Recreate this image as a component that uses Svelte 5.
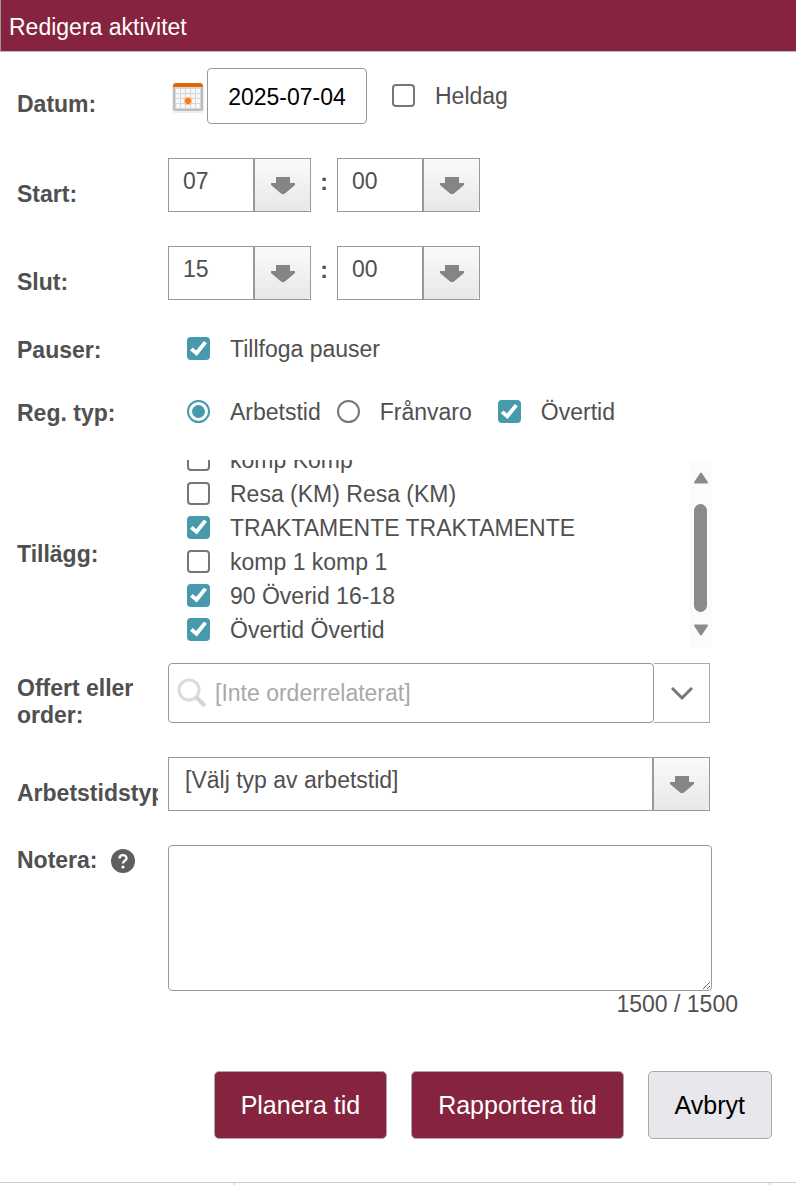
<script>
    let date = $state('2025-07-04');
    let allDay = $state(false);
    let addBreaks = $state(true);
    let regType = $state('arbetstid');
    let overtime = $state(true);
    let order = $state('');
    let workType = $state('');
    let note = $state('');

    let times = $state([
        { id: 'start', label: 'Start:', hour: '07', minute: '00' },
        { id: 'slut', label: 'Slut:', hour: '15', minute: '00' }
    ]);

    let extras = $state([
        { name: 'komp Komp', checked: false },
        { name: 'Resa (KM) Resa (KM)', checked: false },
        { name: 'TRAKTAMENTE TRAKTAMENTE', checked: true },
        { name: 'komp 1 komp 1', checked: false },
        { name: '90 Överid 16-18', checked: true },
        { name: 'Övertid Övertid', checked: true }
    ]);

    const maxLength = 1500;
    const hours = Array.from({ length: 24 }, (_, i) => String(i).padStart(2, '0'));
    const minutes = ['00', '15', '30', '45'];
    let left = $derived(maxLength - note.length);
</script>

{#snippet arrow()}
    <span class="arrow">
        <svg width="24" height="18" viewBox="0 0 24 18" aria-hidden="true">
            <path d="M5 0H19V6H24V8L14 16.5Q12 18 10 16.5L0 8V6H5Z" fill="#858585" />
        </svg>
    </span>
{/snippet}

<header>
    <h1>Redigera aktivitet</h1>
</header>

<form onsubmit={(e) => e.preventDefault()}>
    <div class="row">
        <label class="name" for="datum">Datum:</label>
        <div class="field">
            <button type="button" class="calendar" aria-label="Kalender">
                <svg width="34" height="34" viewBox="0 0 34 34">
                    <rect x="1" y="4" width="32" height="28" rx="3" fill="#eee" />
                    <rect x="2" y="3" width="30" height="27" rx="2" fill="#bdbdbd" />
                    <rect x="4" y="6" width="26" height="22" fill="#d6d6d6" />
                    <g fill="#f7f7f7">
                        {#each [0, 1, 2, 3] as r}
                            {#each [0, 1, 2, 3, 4] as c}
                                <rect x={5 + c * 5} y={8 + r * 5} width="4" height="4" />
                            {/each}
                        {/each}
                    </g>
                    <path d="M4 2H30L32 4V6H2V4Z" fill="#e2660c" />
                    <rect x="13" y="16" width="8" height="8" rx="2" fill="#fbc59c" />
                    <circle cx="17" cy="20" r="3" fill="#f57a17" />
                </svg>
            </button>
            <input id="datum" class="date" type="text" bind:value={date} />
            <label class="choice all-day">
                <input type="checkbox" bind:checked={allDay} />
                Heldag
            </label>
        </div>
    </div>

    {#each times as time}
        <div class="row">
            <label class="name" for={time.id}>{time.label}</label>
            <div class="field">
                <span class="select time">
                    <select id={time.id} bind:value={time.hour}>
                        {#each hours as h}<option>{h}</option>{/each}
                    </select>
                    {@render arrow()}
                </span>
                <span class="colon">:</span>
                <span class="select time">
                    <select aria-label="{time.label} minuter" bind:value={time.minute}>
                        {#each minutes as m}<option>{m}</option>{/each}
                    </select>
                    {@render arrow()}
                </span>
            </div>
        </div>
    {/each}

    <div class="row line">
        <span class="name">Pauser:</span>
        <div class="field inset">
            <label class="choice">
                <input type="checkbox" bind:checked={addBreaks} />
                Tillfoga pauser
            </label>
        </div>
    </div>

    <div class="row line">
        <span class="name">Reg. typ:</span>
        <div class="field inset types">
            <label class="choice">
                <input type="radio" name="regtyp" value="arbetstid" bind:group={regType} />
                Arbetstid
            </label>
            <label class="choice">
                <input type="radio" name="regtyp" value="franvaro" bind:group={regType} />
                Frånvaro
            </label>
            <label class="choice overtime">
                <input type="checkbox" bind:checked={overtime} />
                Övertid
            </label>
        </div>
    </div>

    <div class="row extras-row">
        <span class="name">Tillägg:</span>
        <div class="extras">
            <div class="list">
                {#each extras as extra}
                    <label class="choice">
                        <input type="checkbox" bind:checked={extra.checked} />
                        {extra.name}
                    </label>
                {/each}
            </div>
            <div class="scrollbar">
                <svg width="16" height="12" viewBox="0 0 16 12" aria-hidden="true">
                    <path d="M8 1.5L14 10.5H2Z" fill="#8b8b8b" stroke="#8b8b8b" stroke-width="2" stroke-linejoin="round" />
                </svg>
                <div class="thumb"></div>
                <svg width="16" height="12" viewBox="0 0 16 12" aria-hidden="true">
                    <path d="M8 10.5L14 1.5H2Z" fill="#8b8b8b" stroke="#8b8b8b" stroke-width="2" stroke-linejoin="round" />
                </svg>
            </div>
        </div>
    </div>

    <div class="row order-row">
        <label class="name" for="order">Offert eller order:</label>
        <div class="combo">
            <div class="search">
                <svg width="30" height="30" viewBox="0 0 30 30" aria-hidden="true">
                    <circle cx="12" cy="12" r="10" fill="none" stroke="#dcdcdc" stroke-width="3" />
                    <path d="M19 19L28 28" stroke="#d4d4d4" stroke-width="4" />
                </svg>
                <input id="order" type="text" placeholder="[Inte orderrelaterat]" bind:value={order} />
            </div>
            <button type="button" class="open" aria-label="Visa order">
                <svg width="22" height="14" viewBox="0 0 22 14">
                    <path d="M1 1L11 11L21 1" fill="none" stroke="#777" stroke-width="3" />
                </svg>
            </button>
        </div>
    </div>

    <div class="row">
        <label class="name" for="arbetstidstyp">Arbetstidstyp:</label>
        <span class="select wide">
            <select id="arbetstidstyp" bind:value={workType}>
                <option value="">[Välj typ av arbetstid]</option>
                <option value="normal">Normal arbetstid</option>
            </select>
            {@render arrow()}
        </span>
    </div>

    <div class="row note-row">
        <label class="name note-name" for="notera">
            Notera:
            <svg width="24" height="24" viewBox="0 0 24 24" aria-hidden="true">
                <circle cx="12" cy="12" r="12" fill="#5f5f5f" />
                <path d="M8.5 9.5C8.5 5 15.5 5 15.5 9.2C15.5 11.5 12 11.8 12 14.5" fill="none" stroke="#fff" stroke-width="2.4" />
                <circle cx="12" cy="18" r="1.6" fill="#fff" />
            </svg>
        </label>
        <div class="note">
            <textarea id="notera" maxlength={maxLength} bind:value={note}></textarea>
            <span class="counter">{left} / {maxLength}</span>
        </div>
    </div>

    <div class="buttons">
        <button type="submit">Planera tid</button>
        <button type="button">Rapportera tid</button>
        <button type="button" class="cancel">Avbryt</button>
    </div>
</form>

<div class="grid-edge">
    <span></span>
    <span></span>
    <span></span>
</div>

<style>
    :global(body) {
        background: #fff;
        color: #505050;
        font: 23px/27px "Liberation Sans", Arial, sans-serif;
    }

    input, select, textarea, button {
        box-sizing: border-box;
        margin: 0;
        font: inherit;
        color: inherit;
    }

    header {
        padding: 14px 8px 10px;
        background: #862440;
        border-left: 1px solid #999;
        border-bottom: 1px solid #bbb;
    }

    h1 {
        margin: 0;
        color: #fff;
        font-size: 23px;
        font-weight: normal;
    }

    form {
        padding: 16px 24px 43px 17px;
    }

    .row {
        display: grid;
        grid-template-columns: 141px minmax(0, 1fr);
        column-gap: 10px;
        align-items: start;
        margin-bottom: 34px;
    }

    .name {
        padding-top: 23px;
        overflow: hidden;
        font-weight: bold;
    }

    .field {
        display: flex;
        align-items: center;
    }

    .inset {
        padding-left: 19px;
    }

    .line {
        box-sizing: border-box;
        height: 29px;
        padding-top: 2px;
        align-items: center;
    }

    .line .name {
        padding-top: 2px;
    }

    .choice {
        display: flex;
        align-items: center;
        gap: 20px;
        white-space: nowrap;
    }

    .all-day {
        margin-left: 25px;
    }

    .types {
        gap: 16px;
    }

    .overtime {
        margin-left: 10px;
    }

    input[type="checkbox"],
    input[type="radio"] {
        appearance: none;
        display: grid;
        place-items: center;
        flex: none;
        width: 23px;
        height: 23px;
        margin-bottom: 2px;
        border: 2px solid #767676;
        border-radius: 4px;
        background: #fff;
    }

    input[type="radio"] {
        border-radius: 50%;
    }

    input[type="checkbox"]:checked {
        border-color: #469aab;
        background: #469aab;
    }

    input[type="checkbox"]:checked::before {
        content: "";
        width: 17px;
        height: 15px;
        background: #fff;
        clip-path: polygon(0 61%, 16% 43%, 36% 64%, 82% 0, 100% 15%, 40% 100%);
    }

    input[type="radio"]:checked {
        border-color: #469aab;
    }

    input[type="radio"]:checked::before {
        content: "";
        width: 13px;
        height: 13px;
        border-radius: 50%;
        background: #469aab;
    }

    .calendar {
        display: flex;
        padding: 4px 2px 0 3px;
        border: 0;
        background: none;
    }

    .date {
        width: 160px;
        height: 56px;
        padding: 2px 0 0;
        border: 1px solid #999;
        border-radius: 4px;
        color: #000;
        text-align: center;
    }

    .select {
        display: grid;
        grid-template-columns: minmax(0, 1fr) 58px;
        height: 54px;
    }

    .time {
        width: 143px;
    }

    .select select {
        grid-area: 1 / 1 / 2 / 3;
        appearance: none;
        padding: 0 60px 8px 14px;
        border: 1px solid #999;
        border-radius: 0;
        background: #fff;
    }

    .arrow {
        grid-area: 1 / 2 / 2 / 3;
        display: grid;
        place-items: center;
        margin: 1px 1px 1px 0;
        padding-top: 2px;
        border-left: 2px solid #999;
        border-bottom-right-radius: 4px;
        background: linear-gradient(#fafafa, #e8e8e8);
        pointer-events: none;
    }

    .colon {
        width: 26px;
        padding-bottom: 6px;
        font-weight: bold;
        text-align: center;
    }

    .extras-row {
        align-items: center;
        margin-bottom: 15px;
    }

    .extras-row .name {
        padding-top: 0;
    }

    .extras {
        display: flex;
        height: 188px;
        margin-right: 60px;
    }

    .list {
        flex: 1;
        display: flex;
        flex-direction: column;
        justify-content: flex-end;
        overflow: hidden;
        padding: 0 0 1px 19px;
    }

    .list .choice {
        flex: none;
        height: 34px;
    }

    .scrollbar {
        display: flex;
        flex-direction: column;
        align-items: center;
        gap: 20px;
        width: 23px;
        padding: 12px 0;
        box-sizing: border-box;
        background: #fbfbfb;
    }

    .thumb {
        flex: 1;
        width: 13px;
        border-radius: 7px;
        background: #8b8b8b;
    }

    .scrollbar svg:last-child {
        margin-top: -8px;
    }

    .order-row {
        margin-bottom: 28px;
    }

    .order-row .name {
        padding-top: 12px;
    }

    .combo {
        display: flex;
        height: 60px;
        margin-right: 62px;
    }

    .search {
        flex: 1;
        display: flex;
        align-items: center;
        gap: 8px;
        padding-left: 8px;
        border: 1px solid #999;
        border-radius: 4px;
    }

    .search input {
        flex: 1;
        min-width: 0;
        padding: 0;
        border: 0;
        outline: 0;
        background: none;
    }

    .search input::placeholder {
        color: #a9a9a9;
    }

    .open {
        width: 56px;
        padding: 0;
        border: 1px solid #aaa;
        border-left: 0;
        background: #fff;
    }

    .wide {
        margin-right: 62px;
    }

    .wide select {
        padding-left: 16px;
    }

    .note-row {
        margin-bottom: 53px;
    }

    .note-name {
        display: flex;
        align-items: center;
        gap: 13px;
        padding-top: 2px;
    }

    .note {
        display: flex;
        flex-direction: column;
    }

    textarea {
        height: 146px;
        margin-right: 60px;
        border: 1px solid #999;
        border-radius: 4px;
        background: #fff;
    }

    .counter {
        margin-right: 34px;
        text-align: right;
    }

    .buttons {
        display: flex;
        justify-content: flex-end;
        gap: 24px;
    }

    .buttons button {
        height: 68px;
        padding: 0 26px;
        border: 1px solid #aaa;
        border-radius: 5px;
        background: #862440;
        color: #fff;
        font-size: 25px;
    }

    .buttons .cancel {
        background: #e8e7ec;
        color: #000;
    }

    .grid-edge {
        display: flex;
        border-top: 1px solid #ccc;
    }

    .grid-edge span {
        box-sizing: border-box;
        width: 235px;
        height: 2px;
        border-right: 1px solid #ccc;
    }

    .grid-edge span:nth-child(2) {
        flex: 1;
    }

    .grid-edge span:last-child {
        width: 26px;
        border-right: 0;
    }
</style>
